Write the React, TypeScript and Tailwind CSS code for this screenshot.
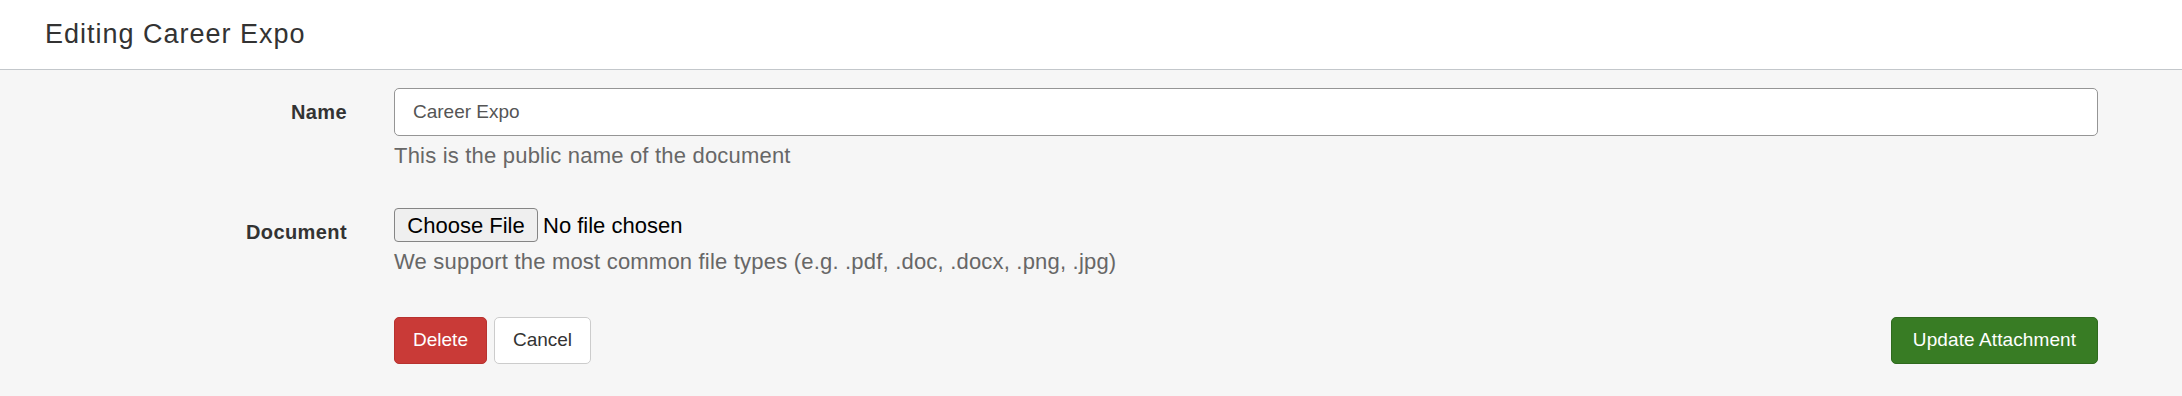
import React from 'react';

const font = { fontFamily: '"Liberation Sans", Arial, sans-serif' };

interface FieldRowProps {
  label: string;
  help: string;
  children: React.ReactNode;
}

const FieldRow: React.FC<FieldRowProps> = ({ label, help, children }) => (
  <div className="grid grid-cols-[347px_1fr] gap-x-[47px]">
    <div className="text-right text-[20px] leading-[48px] font-bold tracking-[0.4px] text-[#333]">
      {label}
    </div>
    <div>
      {children}
      <p className="mt-[5px] text-[22px] leading-[30px] tracking-[0.2px] text-[#676767]">{help}</p>
    </div>
  </div>
);

export default function App() {
  return (
    <div style={font} className="w-[2182px] h-[396px] bg-[#f6f6f6] overflow-hidden">
      {/* Header */}
      <header className="h-[70px] bg-white border-b border-[#c3c7cb] px-[45px]">
        <h1 className="text-[27px] leading-[69px] tracking-[1px] text-[#333]">Editing Career Expo</h1>
      </header>

      {/* Form */}
      <form className="pt-[18px] pr-[84px] flex flex-col gap-[37px]">
        <FieldRow label="Name" help="This is the public name of the document">
          <input
            type="text"
            defaultValue="Career Expo"
            style={font}
            className="w-full h-[48px] bg-white border border-[#959595] rounded-[5px] px-[18px] text-[19px] text-[#555] outline-none"
          />
        </FieldRow>

        <FieldRow
          label="Document"
          help="We support the most common file types (e.g. .pdf, .doc, .docx, .png, .jpg)"
        >
          <div className="flex items-center gap-[5px] h-[34px] text-[22px] text-black">
            <span className="h-[34px] w-[144px] flex items-center justify-center bg-[#efefef] border border-[#858585] rounded-[4px]">
              Choose File
            </span>
            <span>No file chosen</span>
          </div>
        </FieldRow>

        {/* Actions */}
        <div className="mt-[3px] grid grid-cols-[347px_1fr] gap-x-[47px]">
          <div />
          <div className="flex items-center justify-between">
            <div className="flex gap-[7px]">
              <button
                type="button"
                style={font}
                className="h-[47px] w-[93px] rounded-[5px] bg-[#c93a37] border border-[#b8322f] text-white text-[19px]"
              >
                Delete
              </button>
              <button
                type="button"
                style={font}
                className="h-[47px] w-[97px] rounded-[5px] bg-white border border-[#cccccc] text-[#333] text-[19px]"
              >
                Cancel
              </button>
            </div>
            <button
              type="button"
              style={font}
              className="h-[47px] w-[207px] rounded-[5px] bg-[#387c24] border border-[#2f6a1e] text-white text-[19px] tracking-[0.1px]"
            >
              Update Attachment
            </button>
          </div>
        </div>
      </form>
    </div>
  );
}
